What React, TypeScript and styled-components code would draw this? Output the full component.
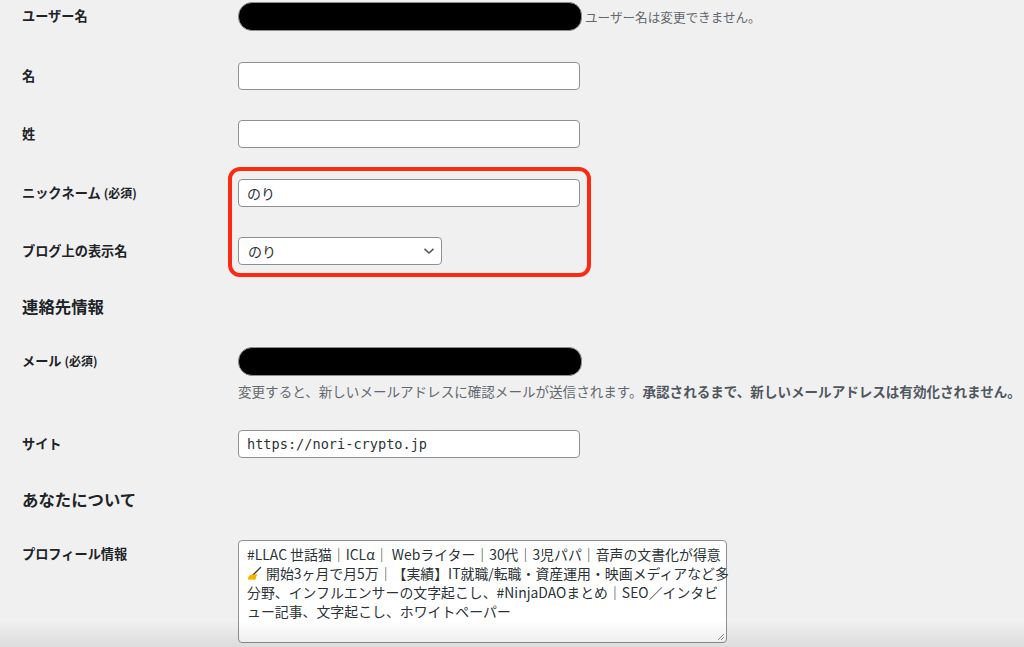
import React from 'react';
import styled, { createGlobalStyle } from 'styled-components';

const GlobalStyle = createGlobalStyle`
  html, body {
    margin: 0;
    background: #f0f0f1;
    overflow: hidden;
  }
  body {
    font-family: 'Noto Sans CJK JP', 'Noto Sans', sans-serif;
    color: #1d2327;
  }
`;

const Page = styled.div`
  margin-top: -13px;
  padding-left: 22px;
  height: 660px;
`;

const FieldRow = styled.div`
  display: grid;
  grid-template-columns: 216px 1fr;
  align-items: start;
  padding: 15px 0 15.5px;
`;

const Label = styled.label`
  font-size: 13.2px;
  font-weight: 700;
  line-height: 28px;
  color: #1d2327;
  white-space: nowrap;
`;

const Required = styled.span`
  font-size: 12px;
  margin-left: 3px;
`;

const SectionTitle = styled.h2`
  margin: 14px 0 15px;
  font-size: 16.4px;
  line-height: 22px;
  font-weight: 700;
  color: #1d2327;
`;

const InlineControl = styled.div`
  display: flex;
  align-items: center;
  gap: 3px;
`;

const TextInput = styled.input<{ $mono?: boolean }>`
  box-sizing: border-box;
  width: 342px;
  height: 28px;
  margin: 0;
  padding: 0 8px;
  border: 1px solid #8c8f94;
  border-radius: 4px;
  background: #fff;
  color: #2c3338;
  font-family: ${(p) =>
    p.$mono ? "'DejaVu Sans Mono', 'Liberation Mono', monospace" : "'Noto Sans CJK JP', sans-serif"};
  font-size: ${(p) => (p.$mono ? '13.6px' : '14px')};
  outline: none;
`;

// blacked-out value box
const Redacted = styled.div`
  box-sizing: border-box;
  width: 344px;
  height: 29px;
  border: 1px solid #8c8f94;
  border-radius: 14px 13px 13px 14px;
  background: #000;
`;

const Note = styled.span`
  font-size: 12.6px;
  color: #646970;
  white-space: nowrap;
`;

const Help = styled.p`
  margin: 6px 0 0;
  font-size: 13.55px;
  line-height: 18px;
  color: #646970;
  white-space: nowrap;

  strong {
    color: #50575e;
    font-weight: 700;
  }
`;

const SelectBox = styled.div`
  box-sizing: border-box;
  width: 204px;
  height: 28px;
  display: flex;
  align-items: center;
  justify-content: space-between;
  padding: 0 6px 0 9px;
  border: 1px solid #8c8f94;
  border-radius: 4px;
  background: #fff;
  color: #2c3338;
  font-size: 14px;
`;

const HighlightGroup = styled.div`
  position: relative;
`;

const HighlightFrame = styled.div`
  position: absolute;
  left: 206px;
  top: 3.5px;
  width: 363px;
  height: 110px;
  box-sizing: border-box;
  border: 4.5px solid #fb2a10;
  border-radius: 12px;
  pointer-events: none;
`;

const ProfileBox = styled.div`
  box-sizing: border-box;
  width: 489px;
  height: 103px;
  padding: 4px 8px;
  border: 1px solid #8c8f94;
  border-radius: 4px;
  background: #fff;
  color: #2c3338;
  font-size: 13.9px;
  line-height: 19px;
  white-space: nowrap;
  position: relative;
`;

const ResizeGrip = styled.svg`
  position: absolute;
  right: 1px;
  bottom: 1px;
`;

const BottomShade = styled.div`
  position: fixed;
  left: 0;
  right: 0;
  bottom: 0;
  height: 26px;
  background: linear-gradient(rgba(0, 0, 0, 0), rgba(0, 0, 0, 0.08));
  pointer-events: none;
`;

const Chevron = () => (
  <svg width="12" height="8" viewBox="0 0 12 8" fill="none">
    <path d="M1.5 1.8 L6 6 L10.5 1.8" stroke="#50575e" strokeWidth="1.6" />
  </svg>
);

const WritingHand = () => (
  <svg width="15" height="14" viewBox="0 0 15 14" style={{ verticalAlign: '-1px', marginRight: 4 }}>
    <path d="M5 10 L13.5 1.5" stroke="#3a3a3a" strokeWidth="1.3" strokeLinecap="round" />
    <path
      d="M0.8 13.5 C0.8 10.8 2.6 8.6 5.2 8.4 L9.6 8.2 C10.8 8.2 10.8 9.8 9.6 9.9 L8.6 10 C9.8 10.5 9.6 12.2 8.4 12.3 C9.2 13 8.6 13.9 7.6 13.8 Z"
      fill="#f5b400"
    />
  </svg>
);

function App(): JSX.Element {
  return (
    <>
      <GlobalStyle />
      <Page>
        <FieldRow>
          <Label>ユーザー名</Label>
          <InlineControl>
            <Redacted />
            <Note>ユーザー名は変更できません。</Note>
          </InlineControl>
        </FieldRow>
        <FieldRow>
          <Label htmlFor="first_name">名</Label>
          <TextInput id="first_name" defaultValue="" />
        </FieldRow>
        <FieldRow>
          <Label htmlFor="last_name">姓</Label>
          <TextInput id="last_name" defaultValue="" />
        </FieldRow>

        <HighlightGroup>
          <FieldRow>
            <Label htmlFor="nickname">
              ニックネーム<Required>(必須)</Required>
            </Label>
            <TextInput id="nickname" defaultValue="のり" />
          </FieldRow>
          <FieldRow>
            <Label>ブログ上の表示名</Label>
            <SelectBox>
              <span>のり</span>
              <Chevron />
            </SelectBox>
          </FieldRow>
          <HighlightFrame />
        </HighlightGroup>

        <SectionTitle>連絡先情報</SectionTitle>
        <FieldRow>
          <Label>
            メール<Required>(必須)</Required>
          </Label>
          <div>
            <Redacted />
            <Help>
              変更すると、新しいメールアドレスに確認メールが送信されます。
              <strong>承認されるまで、新しいメールアドレスは有効化されません。</strong>
            </Help>
          </div>
        </FieldRow>
        <FieldRow>
          <Label htmlFor="url">サイト</Label>
          <TextInput id="url" $mono defaultValue="https://nori-crypto.jp" />
        </FieldRow>

        <SectionTitle>あなたについて</SectionTitle>
        <FieldRow>
          <Label>プロフィール情報</Label>
          <ProfileBox>
            <div>#LLAC 世話猫｜ICLα｜ Webライター｜30代｜3児パパ｜音声の文書化が得意</div>
            <div>
              <WritingHand />
              開始3ヶ月で月5万｜【実績】IT就職/転職・資産運用・映画メディアなど多
            </div>
            <div>分野、インフルエンサーの文字起こし、#NinjaDAOまとめ｜SEO／インタビ</div>
            <div>ュー記事、文字起こし、ホワイトペーパー</div>
            <ResizeGrip width="9" height="9" viewBox="0 0 9 9">
              <path d="M8 2 L2 8 M8 5 L5 8" stroke="#8c8f94" strokeWidth="1" />
            </ResizeGrip>
          </ProfileBox>
        </FieldRow>
      </Page>
      <BottomShade />
    </>
  );
}

export default App;
